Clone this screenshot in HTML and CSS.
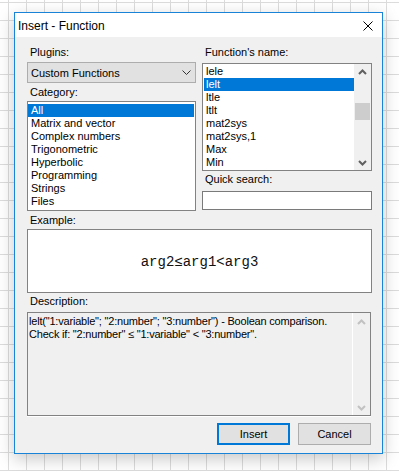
FILE: index.html
```html
<!DOCTYPE html>
<html lang="en">
<head>
<meta charset="UTF-8">
<meta name="viewport" content="width=device-width, initial-scale=1.0">
<title>Insert - Function</title>
<link rel="stylesheet" href="styles.css">
</head>
<body>

  <div class="dialog">
    <div class="titlebar">
      <span class="title">Insert - Function</span>
      <svg class="close" width="10" height="10" viewBox="0 0 10 10">
        <path d="M0.5 0.5 L9.5 9.5 M9.5 0.5 L0.5 9.5" stroke="#000" stroke-width="1" fill="none"/>
      </svg>
    </div>

    <div class="content">
      <div class="columns">
        <div class="col">
          <div class="label">Plugins:</div>
          <div class="select">
            <span>Custom Functions</span>
            <svg class="select-arrow" width="9" height="5" viewBox="0 0 9 5">
              <polyline points="0.5,0.5 4.5,4.5 8.5,0.5" stroke="#333" stroke-width="1" fill="none"/>
            </svg>
          </div>
          <div class="label label-category">Category:</div>
          <ul class="list category-list">
            <li class="selected">All</li>
            <li>Matrix and vector</li>
            <li>Complex numbers</li>
            <li>Trigonometric</li>
            <li>Hyperbolic</li>
            <li>Programming</li>
            <li>Strings</li>
            <li>Files</li>
          </ul>
        </div>

        <div class="col">
          <div class="label label-func">Function's name:</div>
          <div class="list function-list">
            <ul class="items">
              <li>lele</li>
              <li class="selected">lelt</li>
              <li>ltle</li>
              <li>ltlt</li>
              <li>mat2sys</li>
              <li>mat2sys,1</li>
              <li>Max</li>
              <li>Min</li>
            </ul>
            <div class="scrollbar">
              <svg class="arrow" width="9" height="6" viewBox="0 0 9 6">
                <polyline points="1,5 4.5,1.5 8,5" stroke="#606060" stroke-width="2" fill="none"/>
              </svg>
              <div class="track">
                <div class="thumb"></div>
              </div>
              <svg class="arrow" width="9" height="6" viewBox="0 0 9 6">
                <polyline points="1,1 4.5,4.5 8,1" stroke="#606060" stroke-width="2" fill="none"/>
              </svg>
            </div>
          </div>
          <div class="label label-search">Quick search:</div>
          <input class="search" type="text">
        </div>
      </div>

      <div class="label label-example">Example:</div>
      <div class="example">arg2≤arg1&lt;arg3</div>

      <div class="label label-desc">Description:</div>
      <div class="description">
        <div class="desc-text">
          lelt("1:variable"; "2:number"; "3:number") - Boolean comparison.<br>
          Check if: "2:number" ≤ "1:variable" &lt; "3:number".
        </div>
        <div class="scrollbar disabled">
          <svg class="arrow" width="9" height="6" viewBox="0 0 9 6">
            <polyline points="1,5 4.5,1.5 8,5" stroke="#c2c2c2" stroke-width="2" fill="none"/>
          </svg>
          <div class="track"></div>
          <svg class="arrow" width="9" height="6" viewBox="0 0 9 6">
            <polyline points="1,1 4.5,4.5 8,1" stroke="#c2c2c2" stroke-width="2" fill="none"/>
          </svg>
        </div>
      </div>

      <div class="buttons">
        <button class="btn btn-default">Insert</button>
        <button class="btn">Cancel</button>
      </div>
    </div>
  </div>

</body>
</html>
```

FILE: styles.css
```css
* {
  box-sizing: border-box;
  margin: 0;
  padding: 0;
}

body {
  font-family: "Liberation Sans", Arial, sans-serif;
  font-size: 11px;
  color: #000;
  min-height: 471px;
  background-color: #fff;
  background-image:
    linear-gradient(to right, #dcdcdc 1px, transparent 1px),
    linear-gradient(to bottom, #dcdcdc 1px, transparent 1px);
  background-size: 18px 18px;
  background-position: 8px 2px;
  padding: 12px 0 0 14px;
}

/* Dialog window */

.dialog {
  width: 369px;
  height: 442px;
  border: 1px solid #1883d7;
  background-color: #f0f0f0;
  box-shadow: 0 5px 16px rgba(0, 0, 0, 0.22);
}

.titlebar {
  height: 24px;
  background-color: #fff;
  display: flex;
  align-items: center;
  justify-content: space-between;
  padding: 0 9px 0 3px;
}

.title {
  font-size: 12px;
  line-height: 14px;
  padding-top: 1px;
}

.close {
  display: block;
  margin-top: 1px;
}

.content {
  padding: 9px 10px 8px 12px;
}

.label {
  height: 13px;
  line-height: 13px;
  padding-left: 3px;
  white-space: nowrap;
}

/* Top columns */

.columns {
  display: grid;
  grid-template-columns: 169px 170px;
  column-gap: 6px;
}

.col {
  display: flex;
  flex-direction: column;
}

.select {
  margin-top: 3px;
  height: 21px;
  background-color: #e1e1e1;
  border: 1px solid #adadad;
  display: flex;
  align-items: center;
  justify-content: space-between;
  padding: 0 4px 0 3px;
}

.select-arrow {
  display: block;
}

.label-category {
  margin-top: 3px;
}

.list {
  list-style: none;
  background-color: #fff;
  border: 1px solid #828282;
}

.list li {
  height: 13px;
  line-height: 13px;
  white-space: nowrap;
}

.list li.selected {
  background-color: #0078d7;
  color: #fff;
}

.category-list {
  margin-top: 2px;
  height: 110px;
  padding: 2px 1px 2px 0;
}

.category-list li {
  padding-left: 3px;
}

.label-func {
  margin-bottom: 4px;
}

.function-list {
  height: 108px;
  display: flex;
  padding: 1px 0 1px 1px;
}

.function-list .items {
  list-style: none;
  flex: 1;
}

.function-list li {
  padding-left: 2px;
}

/* Scrollbars */

.scrollbar {
  width: 17px;
  background-color: #f0f0f0;
  display: flex;
  flex-direction: column;
  align-items: center;
  padding: 5px 0 4px;
}

.function-list .scrollbar {
  margin: -1px 0 -1px 0;
}

.scrollbar .arrow {
  display: block;
  flex: none;
}

.track {
  flex: 1;
  width: 100%;
  padding: 28px 1px 0;
}

.thumb {
  height: 17px;
  background-color: #cdcdcd;
}

.label-search {
  margin-top: 2px;
}

.search {
  margin-top: 5px;
  height: 19px;
  border: 1px solid #7a7a7a;
  background-color: #fff;
  width: 100%;
}

/* Example and description */

.label-example {
  margin-top: 3px;
}

.example {
  margin-top: 2px;
  height: 64px;
  width: 345px;
  background-color: #fff;
  border: 1px solid #828282;
  display: flex;
  align-items: center;
  justify-content: center;
  font-family: "Liberation Mono", "Courier New", monospace;
  font-size: 14px;
  color: #111;
  padding-top: 2px;
}

.label-desc {
  margin-top: 2px;
}

.description {
  margin-top: 4px;
  height: 104px;
  width: 344px;
  border: 1px solid #828282;
  box-shadow: 0 1px 0 #fff;
  display: flex;
}

.desc-text {
  flex: 1;
  line-height: 13px;
  padding: 2px 0 0 1px;
  letter-spacing: -0.2px;
  white-space: nowrap;
}

.scrollbar.disabled {
  border-left: 1px solid #fff;
  width: 18px;
  padding: 6px 0 4px;
}

/* Buttons */

.buttons {
  margin-top: 7px;
  display: flex;
  justify-content: flex-end;
  gap: 8px;
  padding-right: 1px;
}

.btn {
  width: 73px;
  height: 22px;
  background-color: #e1e1e1;
  border: 1px solid #adadad;
  font-family: "Liberation Sans", Arial, sans-serif;
  font-size: 11px;
  color: #000;
}

.btn-default {
  border: 2px solid #0078d7;
}
```
